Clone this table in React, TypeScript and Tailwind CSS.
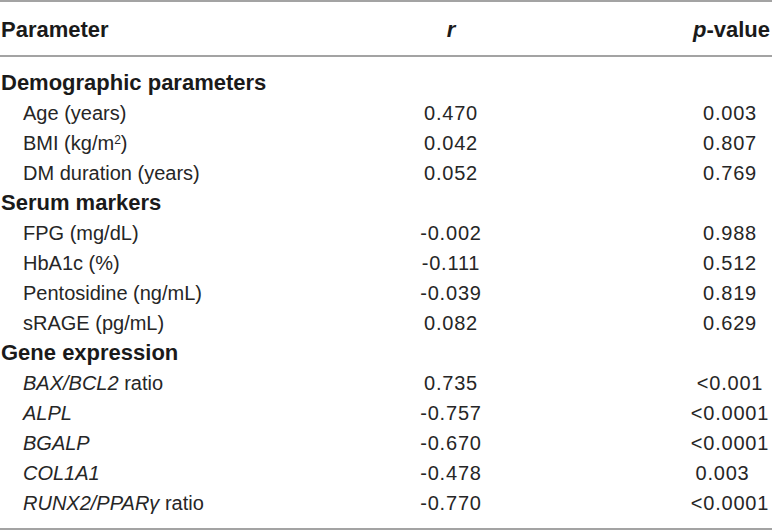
import React from "react";

type Row = {
    label: React.ReactNode;
    r: string;
    p: string;
    pShift?: boolean;
};

type Section = {
    title: string;
    rows: Array<Row>;
};

const sections: Array<Section> = [
    {
        title: "Demographic parameters",
        rows: [
            {label: "Age (years)", r: "0.470", p: "0.003"},
            {label: <>BMI (kg/m<sup className="text-[12px] align-baseline relative -top-[6px]">2</sup>)</>, r: "0.042", p: "0.807"},
            {label: "DM duration (years)", r: "0.052", p: "0.769"},
        ],
    },
    {
        title: "Serum markers",
        rows: [
            {label: "FPG (mg/dL)", r: "-0.002", p: "0.988"},
            {label: "HbA1c (%)", r: "-0.111", p: "0.512"},
            {label: "Pentosidine (ng/mL)", r: "-0.039", p: "0.819"},
            {label: "sRAGE (pg/mL)", r: "0.082", p: "0.629"},
        ],
    },
    {
        title: "Gene expression",
        rows: [
            {label: <><i>BAX/BCL2</i> ratio</>, r: "0.735", p: "<0.001"},
            {label: <i>ALPL</i>, r: "-0.757", p: "<0.0001"},
            {label: <i>BGALP</i>, r: "-0.670", p: "<0.0001"},
            {label: <i>COL1A1</i>, r: "-0.478", p: "0.003", pShift: true},
            {label: <><i>RUNX2/PPARγ</i> ratio</>, r: "-0.770", p: "<0.0001"},
        ],
    },
];

function TableRow({row}: {row: Row}) {
    return (
        <div className="flex h-[30px] items-center">
            <div className="flex-1 pl-[23px]">{row.label}</div>
            <div className="w-[102px] text-center tracking-[0.8px]">{row.r}</div>
            <div className="ml-[186px] w-[84px] text-center tracking-[0.8px]">
                <span className={row.pShift ? "pr-[15px]" : ""}>{row.p}</span>
            </div>
        </div>
    );
}

export default function App() {
    return (
        <div className="w-[772px] h-[531px] bg-white text-[#262626] text-[20px] leading-none" style={{fontFamily: '"Liberation Sans", Arial, sans-serif'}}>
            <div className="h-[2px] bg-[#a3a3a3]"/>
            <div className="flex h-[53px] items-center pt-[2px] font-bold text-[22px] text-[#1a1a1a]">
                <div className="flex-1 pl-[1px]">Parameter</div>
                <div className="w-[102px] text-center"><i>r</i></div>
                <div className="ml-[186px] w-[84px] text-right pr-[2px] whitespace-nowrap"><i>p</i>-value</div>
            </div>
            <div className="h-[2px] bg-[#a3a3a3]"/>
            <div className="pt-[11px] pb-[10px]">
                {sections.map((section) => (
                    <div key={section.title}>
                        <div className="flex h-[30px] items-center pl-[1px] font-bold text-[22px] text-[#1a1a1a]">{section.title}</div>
                        {section.rows.map((row, i) => (
                            <TableRow key={i} row={row}/>
                        ))}
                    </div>
                ))}
            </div>
            <div className="h-[2px] bg-[#a3a3a3]"/>
        </div>
    );
}
